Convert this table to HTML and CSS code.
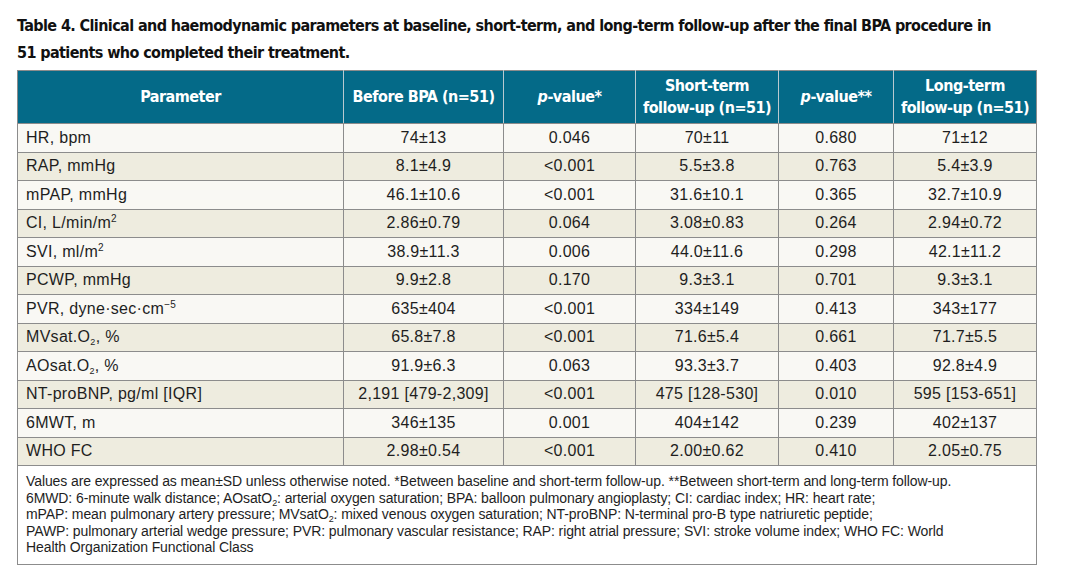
FILE: index.html
```html
<!DOCTYPE html>
<html>
<head>
<meta charset="utf-8">
<link rel="stylesheet" href="styles.css">
</head>
<body>
<div class="page">
  <h1 class="title">Table 4. Clinical and haemodynamic parameters at baseline, short-term, and long-term follow-up after the final BPA procedure in<br>51 patients who completed their treatment.</h1>
  <table class="data">
    <colgroup>
      <col class="c1"><col class="c2"><col class="c3"><col class="c4"><col class="c5"><col class="c6">
    </colgroup>
    <thead>
      <tr>
        <th>Parameter</th>
        <th>Before BPA (n=51)</th>
        <th><i>p</i>-value*</th>
        <th>Short-term<br>follow-up (n=51)</th>
        <th><i>p</i>-value**</th>
        <th>Long-term<br>follow-up (n=51)</th>
      </tr>
    </thead>
    <tbody>
      <tr><td>HR, bpm</td><td>74±13</td><td>0.046</td><td>70±11</td><td>0.680</td><td>71±12</td></tr>
      <tr><td>RAP, mmHg</td><td>8.1±4.9</td><td>&lt;0.001</td><td>5.5±3.8</td><td>0.763</td><td>5.4±3.9</td></tr>
      <tr><td>mPAP, mmHg</td><td>46.1±10.6</td><td>&lt;0.001</td><td>31.6±10.1</td><td>0.365</td><td>32.7±10.9</td></tr>
      <tr><td>CI, L/min/m<sup>2</sup></td><td>2.86±0.79</td><td>0.064</td><td>3.08±0.83</td><td>0.264</td><td>2.94±0.72</td></tr>
      <tr><td>SVI, ml/m<sup>2</sup></td><td>38.9±11.3</td><td>0.006</td><td>44.0±11.6</td><td>0.298</td><td>42.1±11.2</td></tr>
      <tr><td>PCWP, mmHg</td><td>9.9±2.8</td><td>0.170</td><td>9.3±3.1</td><td>0.701</td><td>9.3±3.1</td></tr>
      <tr><td>PVR, dyne·sec·cm<sup>−5</sup></td><td>635±404</td><td>&lt;0.001</td><td>334±149</td><td>0.413</td><td>343±177</td></tr>
      <tr><td>MVsat.O<sub>2</sub>, %</td><td>65.8±7.8</td><td>&lt;0.001</td><td>71.6±5.4</td><td>0.661</td><td>71.7±5.5</td></tr>
      <tr><td>AOsat.O<sub>2</sub>, %</td><td>91.9±6.3</td><td>0.063</td><td>93.3±3.7</td><td>0.403</td><td>92.8±4.9</td></tr>
      <tr><td>NT-proBNP, pg/ml [IQR]</td><td>2,191 [479-2,309]</td><td>&lt;0.001</td><td>475 [128-530]</td><td>0.010</td><td>595 [153-651]</td></tr>
      <tr><td>6MWT, m</td><td>346±135</td><td>0.001</td><td>404±142</td><td>0.239</td><td>402±137</td></tr>
      <tr><td>WHO FC</td><td>2.98±0.54</td><td>&lt;0.001</td><td>2.00±0.62</td><td>0.410</td><td>2.05±0.75</td></tr>
    </tbody>
    <tfoot>
      <tr>
        <td colspan="6" class="note">Values are expressed as mean±SD unless otherwise noted. *Between baseline and short-term follow-up. **Between short-term and long-term follow-up.<br>6MWD: 6-minute walk distance; AOsatO<sub>2</sub>: arterial oxygen saturation; BPA: balloon pulmonary angioplasty; CI: cardiac index; HR: heart rate;<br>mPAP: mean pulmonary artery pressure; MVsatO<sub>2</sub>: mixed venous oxygen saturation; NT-proBNP: N-terminal pro-B type natriuretic peptide;<br>PAWP: pulmonary arterial wedge pressure; PVR: pulmonary vascular resistance; RAP: right atrial pressure; SVI: stroke volume index; WHO FC: World<br>Health Organization Functional Class</td>
      </tr>
    </tfoot>
  </table>
</div>
</body>
</html>
```
FILE: styles.css
```css
html, body {
  margin: 0;
  padding: 0;
  background: #ffffff;
}
.page {
  padding: 12px 0 0 17px;
  font-family: "Liberation Sans", Arial, sans-serif;
  color: #1e1e1e;
}
.title {
  margin: 0 0 4px 0;
  font-family: "DejaVu Sans Condensed", "DejaVu Sans", sans-serif;
  font-stretch: condensed;
  font-size: 16px;
  line-height: 27px;
  font-weight: bold;
  color: #111;
  letter-spacing: -0.6px;
  white-space: nowrap;
}
.data {
  border-collapse: collapse;
  width: 1019px;
  table-layout: fixed;
  border: 1px solid #8c8c8c;
}
.c1 { width: 326px; }
.c2 { width: 160px; }
.c3 { width: 132px; }
.c4 { width: 143px; }
.c5 { width: 115px; }
.c6 { width: 143px; }
.data th {
  background: #046a88;
  color: #ffffff;
  font-family: "DejaVu Sans Condensed", "DejaVu Sans", sans-serif;
  font-stretch: condensed;
  font-size: 16px;
  letter-spacing: -0.5px;
  line-height: 22px;
  font-weight: bold;
  height: 52px;
  padding: 0 2px;
  text-align: center;
  white-space: nowrap;
  border-left: 1px solid #b9c9cf;
  border-bottom: 1px solid #8c8c8c;
}
.data th:first-child { border-left: none; }
.data th i { font-weight: bold; }
.data td {
  font-size: 16px;
  letter-spacing: 0.3px;
  height: 27.5px;
  padding: 0 8px;
  text-align: center;
  border: 1px solid #8c8c8c;
  white-space: nowrap;
}
.data tbody td:first-child { text-align: left; }
.data tbody tr:nth-child(odd) td { background: #f9f8f4; }
.data tbody tr:nth-child(even) td { background: #eeecdf; }
.data sub {
  font-size: 9px;
  line-height: 0;
  vertical-align: -3px;
}
.data sup {
  font-size: 10px;
  line-height: 0;
  vertical-align: 6px;
}
.data td.note {
  text-align: left;
  white-space: nowrap;
  font-size: 14px;
  letter-spacing: -0.1px;
  line-height: 16.6px;
  padding: 7px 8px 8px 8px;
  height: auto;
  background: #ffffff;
}
```
